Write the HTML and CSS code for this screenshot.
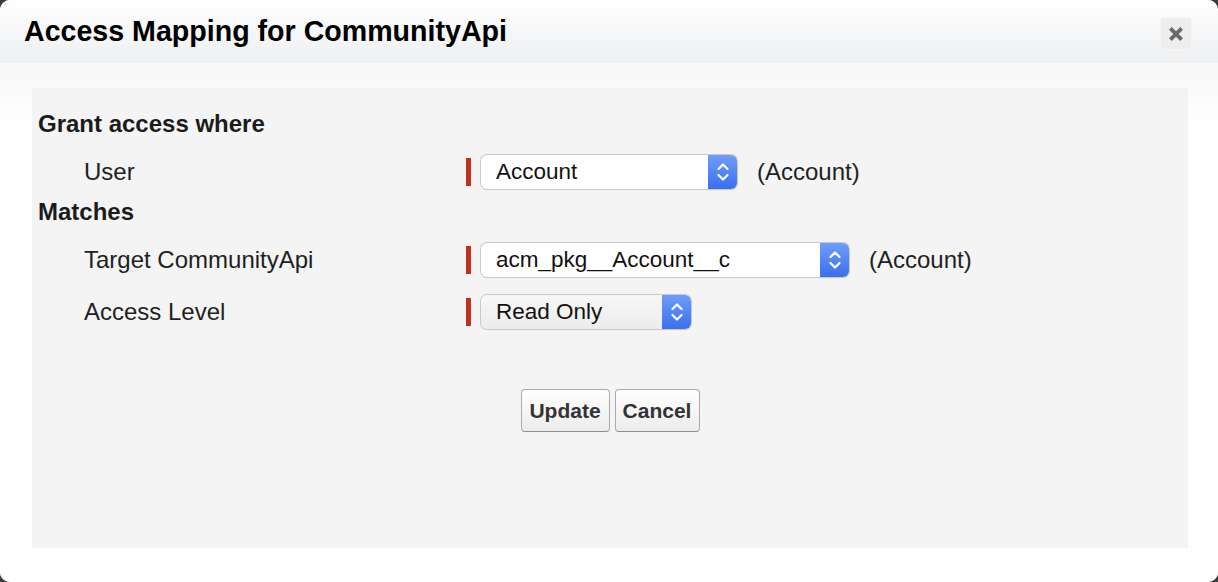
FILE: index.html
```html
<!DOCTYPE html>
<html>
<head>
<meta charset="utf-8">
<title>Access Mapping</title>
<link rel="stylesheet" href="styles.css">
</head>
<body>
<div class="dialog">
  <div class="header">
    <h1 class="title">Access Mapping for CommunityApi</h1>
    <div class="close">
      <svg width="18" height="18" viewBox="0 0 16 16"><path d="M3 3 L13 13 M13 3 L3 13" stroke="#6b6b6b" stroke-width="3.4" stroke-linecap="butt"/></svg>
    </div>
  </div>
  <div class="body">
    <div class="panel">
      <div class="section">Grant access where</div>
      <div class="row r-user">
        <div class="label">User</div>
        <div class="req"></div>
        <div class="select w-user"><span class="val">Account</span><span class="arrow"><svg width="16" height="26" viewBox="0 0 16 26"><path d="M3.5 10 L8 5.5 L12.5 10 M3.5 16 L8 20.5 L12.5 16" fill="none" stroke="#fff" stroke-width="2.2" stroke-linecap="round" stroke-linejoin="round"/></svg></span></div>
        <div class="type">(Account)</div>
      </div>
      <div class="section s-match">Matches</div>
      <div class="row r-target">
        <div class="label">Target CommunityApi</div>
        <div class="req"></div>
        <div class="select w-target"><span class="val">acm_pkg__Account__c</span><span class="arrow"><svg width="16" height="26" viewBox="0 0 16 26"><path d="M3.5 10 L8 5.5 L12.5 10 M3.5 16 L8 20.5 L12.5 16" fill="none" stroke="#fff" stroke-width="2.2" stroke-linecap="round" stroke-linejoin="round"/></svg></span></div>
        <div class="type">(Account)</div>
      </div>
      <div class="row r-level">
        <div class="label">Access Level</div>
        <div class="req"></div>
        <div class="select gray w-level"><span class="val">Read Only</span><span class="arrow"><svg width="16" height="26" viewBox="0 0 16 26"><path d="M3.5 10 L8 5.5 L12.5 10 M3.5 16 L8 20.5 L12.5 16" fill="none" stroke="#fff" stroke-width="2.2" stroke-linecap="round" stroke-linejoin="round"/></svg></span></div>
      </div>
      <div class="buttons">
        <button class="btn b-update">Update</button>
        <button class="btn b-cancel">Cancel</button>
      </div>
    </div>
  </div>
</div>
</body>
</html>
```

FILE: styles.css
```css
html, body {
  margin: 0;
  padding: 0;
  background: #3c3c3c;
}
body {
  font-family: "Liberation Sans", Arial, sans-serif;
  color: #1b1b1b;
}
.dialog {
  width: 1218px;
  height: 582px;
  border-radius: 10px;
  overflow: hidden;
  background: #fff;
  display: flex;
  flex-direction: column;
}
.header {
  height: 63px;
  flex: none;
  display: flex;
  align-items: center;
  justify-content: space-between;
  padding: 0 26px 0 24px;
  background: linear-gradient(#ffffff, #edeff1);
  border-bottom: 2px solid #fbfbfb;
}
.title {
  margin: 0;
  font-size: 28.6px;
  font-weight: bold;
  color: #000;
}
.close {
  width: 32px;
  height: 33px;
  box-sizing: border-box;
  border: 1px solid #f6f6f6;
  border-radius: 4px;
  background: #eeeeee;
  display: flex;
  align-items: center;
  justify-content: center;
  margin-top: 4px;
}
.body {
  flex: 1;
  background: linear-gradient(#f7f7f7, #ffffff 60px);
  padding: 23px 30px 34px 32px;
}
.panel {
  height: 460px;
  background: #f4f4f4;
  padding: 0 6px;
  box-sizing: border-box;
  overflow: hidden;
}
.section {
  font-size: 24px;
  font-weight: bold;
  line-height: 28px;
  margin-top: 22px;
  color: #1b1b1b;
}
.s-match {
  margin-top: 9px;
}
.row {
  display: flex;
  align-items: center;
  height: 34px;
  margin-top: 17px;
}
.r-level {
  margin-top: 18px;
}
.label {
  width: 382px;
  padding-left: 46px;
  font-size: 24px;
  color: #1f1f1f;
}
.req {
  width: 5px;
  height: 28px;
  background: #c0301f;
  margin-right: 10px;
}
.select {
  height: 34px;
  box-sizing: border-box;
  background: #fff;
  border-radius: 6px;
  box-shadow: 0 0 0 1px #c9c9c9, 0 1px 1px rgba(0,0,0,0.15);
  display: flex;
  align-items: center;
  justify-content: space-between;
  overflow: hidden;
}
.select.gray {
  background: linear-gradient(#f7f7f7, #ececec);
}
.w-user { width: 256px; }
.w-target { width: 368px; }
.w-level { width: 210px; }
.val {
  padding-left: 15px;
  font-size: 22.5px;
  color: #111;
}
.arrow {
  width: 29px;
  height: 34px;
  background: linear-gradient(#6f9ef8, #3a6fef);
  display: flex;
  align-items: center;
  justify-content: center;
}
.type {
  margin-left: 20px;
  font-size: 24px;
  color: #1f1f1f;
}
.buttons {
  display: flex;
  justify-content: center;
  gap: 5px;
  margin-top: 60px;
}
.btn {
  height: 43px;
  box-sizing: border-box;
  border: 1px solid #a9a9a9;
  border-bottom-color: #8e8e8e;
  border-radius: 4px;
  background: linear-gradient(#ffffff, #ececec);
  font-family: "Liberation Sans", Arial, sans-serif;
  font-size: 21px;
  font-weight: bold;
  color: #333;
  padding: 0 7px;
  margin: 0;
}
.b-update { width: 89px; }
.b-cancel { width: 85px; }
```
